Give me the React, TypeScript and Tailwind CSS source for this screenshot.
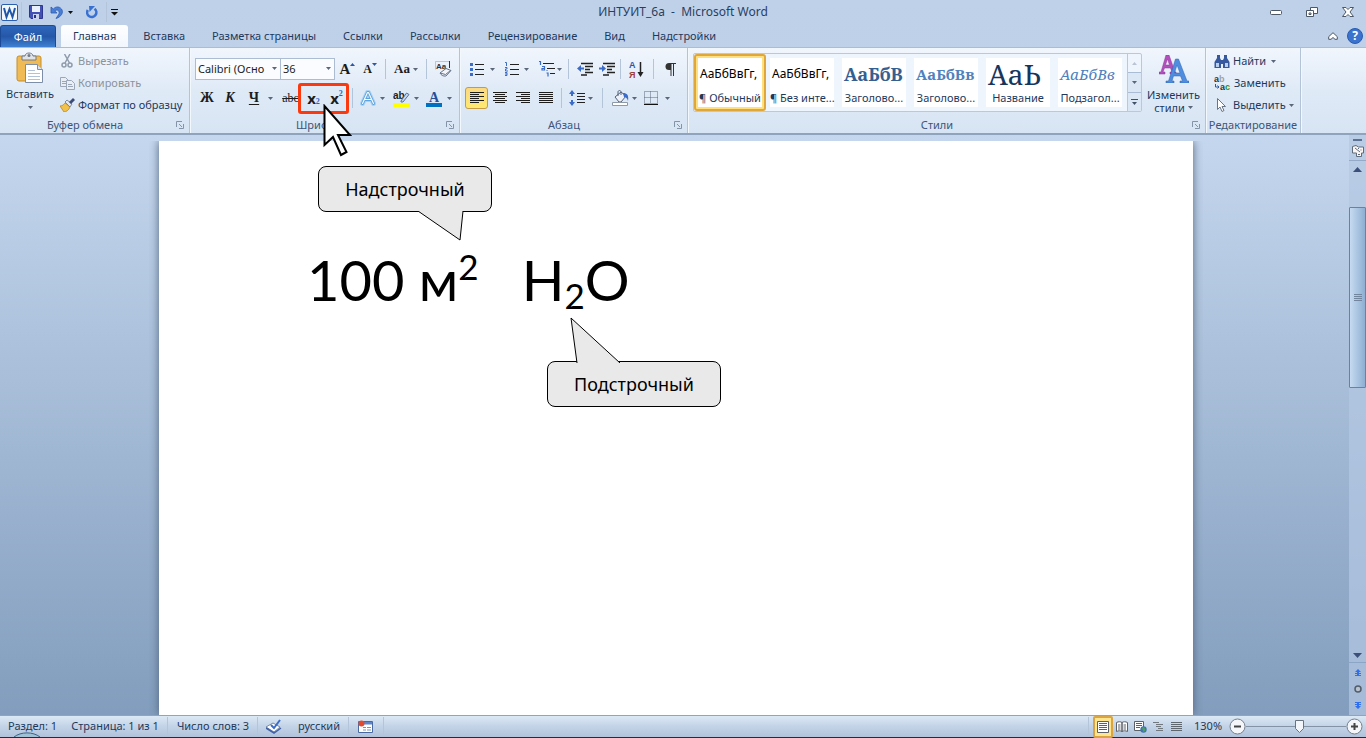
import React, { useState } from 'react';

const INK = '#1e395b';

const Arrow = ({ className = '' }: { className?: string }) => (
  <svg className={`shrink-0 ${className}`} width="5" height="3" viewBox="0 0 5 3">
    <path d="M0 0h5L2.5 3z" fill="#5a6779" />
  </svg>
);

const Sep = ({ className = '' }: { className?: string }) => (
  <span className={`w-px h-5 shrink-0 bg-[#b4c4d9] ${className}`}></span>
);

const Launcher = () => (
  <svg width="8" height="8" viewBox="0 0 8 8" fill="none" stroke="#8393a8">
    <path d="M.5 6V.5H6M3 3l3 3M7.5 3v4.500H3" />
  </svg>
);

type ToolProps = { label: string; className: string; children: React.ReactNode };

const Tool = ({ label, className, children }: ToolProps) => (
  <button type="button" title={label} aria-label={label} className={`h-[22px] shrink-0 flex items-center justify-center ${className}`}>
    {children}
  </button>
);

type GroupProps = { title: string; launcher?: boolean; className?: string; children: React.ReactNode };

const Group = ({ title, launcher, className = '', children }: GroupProps) => (
  <section className={`flex flex-col shrink-0 border-r border-[#b3c3d8] shadow-[1px_0_0_#f3f8fd] ${className}`}>
    <div className="h-[68px] flex">{children}</div>
    <div className="h-[17px] flex items-center pt-px text-[#3e5577]">
      <h2 className="flex-1 text-center whitespace-nowrap">{title}</h2>
      {launcher && (
        <button type="button" aria-label={`${title}: параметры`} className="w-[19px] flex justify-center">
          <Launcher />
        </button>
      )}
    </div>
  </section>
);

/* Lines of text used by the alignment buttons */
const Lines = ({ rows, color = '#1d1d1d' }: { rows: number[][]; color?: string }) => (
  <svg width="16" height="12" viewBox="0 0 16 12" stroke={color}>
    {rows.map(([x1, x2], i) => (
      <path key={i} d={`M${x1} ${i * 2 + 0.5}H${x2}`} />
    ))}
  </svg>
);

const alignments = [
  { label: 'По левому краю', rows: [[1, 15], [1, 10], [1, 15], [1, 10], [1, 15], [1, 10]] },
  { label: 'По центру', rows: [[1, 15], [3, 13], [1, 15], [3, 13], [1, 15], [3, 13]] },
  { label: 'По правому краю', rows: [[1, 15], [6, 15], [1, 15], [6, 15], [1, 15], [6, 15]] },
  { label: 'По ширине', rows: [[1, 15], [1, 15], [1, 15], [1, 15], [1, 15], [1, 15]] },
];

const tabs = ['Вставка', 'Разметка страницы', 'Ссылки', 'Рассылки', 'Рецензирование', 'Вид', 'Надстройки'];

const styles = [
  { name: '¶ Обычный', sample: 'АаБбВвГг,', look: 'text-xs text-black' },
  { name: '¶ Без инте...', sample: 'АаБбВвГг,', look: 'text-xs text-black' },
  { name: 'Заголово...', sample: 'АаБбВ', look: "text-lg font-bold text-[#365f91] font-['Noto_Serif','Liberation_Serif',serif]" },
  { name: 'Заголово...', sample: 'АаБбВв', look: "text-[15px] font-bold text-[#4f81bd] font-['Noto_Serif','Liberation_Serif',serif]" },
  { name: 'Название', sample: 'АаЬ', look: "text-[28px] leading-[28px] text-[#17365d] font-['Noto_Serif','Liberation_Serif',serif]" },
  { name: 'Подзагол...', sample: 'АаБбВв', look: "text-[15px] italic text-[#4f81bd] font-['Noto_Serif','Liberation_Serif',serif]" },
];

const TitleBar = () => (
  <header className="h-6 shrink-0 grid grid-cols-[1fr_auto_1fr] items-center">
    <div className="flex items-center">
      <svg className="ml-px" width="17" height="17" viewBox="0 0 17 17">
        <rect x=".5" y=".5" width="16" height="16" rx="1.500" fill="#f4f8fd" stroke="#2b5fae" />
        <path d="M3 4l2.500 9L8.500 5l3 8L14 4" fill="none" stroke="#1f56a8" strokeWidth="2" />
      </svg>
      <Sep className="ml-[3px] h-3 bg-[#7387a3]" />
      <Tool label="Сохранить" className="w-5 ml-1">
        <svg width="14" height="14" viewBox="0 0 14 14">
          <path d="M.5.5h13v13H2L.5 12z" fill="#4351b5" stroke="#2d3790" />
          <path d="M3 1h8v6H3z" fill="#eaf1fc" />
          <path d="M4 9h6v5H4z" fill="#c9d3ee" />
          <path d="M5 10h2v3H5z" fill="#28318a" />
        </svg>
      </Tool>
      <Tool label="Отменить" className="w-4 ml-0.5">
        <svg width="13" height="13" viewBox="0 0 13 13">
          <path d="M1 1v6h6L4.800 5C7 3 10 4.500 9 8l-3 4.500c5-1.500 8-6 5.500-9.500C9 0 5.500.5 3.300 3z" fill="#4a7fd8" stroke="#2d5cb0" strokeWidth=".8" />
        </svg>
      </Tool>
      <svg className="ml-1" width="5" height="3"><path d="M0 0h5L2.500 3z" fill="#111" /></svg>
      <Tool label="Повторить" className="w-5 ml-2">
        <svg width="13" height="13" viewBox="0 0 13 13" fill="none">
          <path d="M2.800 4a4.600 4.600 0 1 0 6.700-1.300" stroke="#3870d2" strokeWidth="2.600" />
          <path d="M4 0h6L4.500 6z" fill="#3870d2" />
        </svg>
      </Tool>
      <Sep className="ml-[5px] h-3 bg-[#7387a3]" />
      <svg className="ml-1" width="7" height="7"><path d="M0 .5h7" stroke="#111" /><path d="M0 3h7L3.500 6.500z" fill="#111" /></svg>
    </div>
    <h1 className="text-xs leading-4 text-[#2a3f5f]">ИНТУИТ_6а&nbsp; -&nbsp; Microsoft Word</h1>
    <div className="flex items-center justify-end">
      <Tool label="Свернуть" className="w-9">
        <svg width="12" height="5"><rect x=".5" y=".5" width="11" height="4" rx="1" fill="#fff" stroke="#4d5866" /></svg>
      </Tool>
      <Tool label="Восстановить" className="w-9">
        <svg width="12" height="11" viewBox="0 0 12 11" fill="#fff" stroke="#4d5866">
          <path d="M4.500.5h7v6h-7z" />
          <path d="M.5 3.500h7v6h-7zM3 6h2v1.500H3z" />
        </svg>
      </Tool>
      <Tool label="Закрыть" className="w-9">
        <svg width="12" height="10" viewBox="0 0 12 10">
          <path d="M.5.5h3.500l2 2 2-2h3.500L8 5l3.500 4.500H8l-2-2-2 2H.5L4 5z" fill="#fff" stroke="#4d5866" />
        </svg>
      </Tool>
    </div>
  </header>
);

const TabBar = () => (
  <nav className="h-[23px] shrink-0 flex items-end leading-4">
    <button type="button" className="w-14 h-[22px] rounded-t-[3px] border border-b-0 border-[#1d4a94] bg-linear-to-b from-[#2f67bd] via-[#2557a8] to-[#3f80d2] text-white">
      Файл
    </button>
    <button type="button" className="h-[22px] px-3 ml-[5px] rounded-t-[3px] bg-linear-to-b from-white to-[#f1f6fd]">
      Главная
    </button>
    <div className="flex gap-[27px] ml-[15px]">
      {tabs.map((tab) => (
        <button key={tab} type="button" className="h-[22px]">
          {tab}
        </button>
      ))}
    </div>
    <div className="ml-auto flex items-center">
      <Tool label="Свернуть ленту" className="w-4 mr-1.5">
        <svg width="10" height="8" viewBox="0 0 10 8">
          <path d="M5 .7l4.300 4v2.600H7L5 5.500 3 7.300H.7V4.700z" fill="#fff" stroke="#4d5866" />
        </svg>
      </Tool>
      <Tool label="Справка" className="w-4 mr-[3px]">
        <span className="size-4 rounded-full bg-[#3b73cf] border border-[#2a5bb0] text-white text-xs leading-[14px] font-bold">?</span>
      </Tool>
    </div>
  </nav>
);

const Clipboard = () => (
  <Group title="Буфер обмена" launcher className="w-[190px]">
    <button type="button" className="w-[60px] pt-1 flex flex-col items-center">
      <svg width="28" height="32" viewBox="0 0 28 32">
        <rect x="1" y="4" width="24" height="25" rx="2" fill="#f0bb55" stroke="#c58e2e" />
        <path d="M6 4h3c0-4 8-4 8 0h3v4H6z" fill="#dfe3e8" stroke="#727b87" />
        <circle cx="13" cy="3.500" r="1.500" fill="#727b87" />
        <path d="M9.500 12.500h12l5 5v13h-17z" fill="#fff" stroke="#7c8ea8" />
        <path d="M21.500 12.500v5h5" fill="#dbe5f2" stroke="#7c8ea8" />
        <path d="M12 18.500h7M12 21.500h12M12 24.500h12M12 27.500h12" stroke="#b2c1d6" />
      </svg>
      <span className="leading-4 mt-0.5">Вставить</span>
      <Arrow className="mt-1" />
    </button>
    <div className="flex flex-col pt-0.5">
      <button type="button" disabled className="h-[22px] flex items-center gap-[3px] text-[#8b939d]">
        <svg width="15" height="14" viewBox="0 0 15 14" fill="none" stroke="#8f9bab" strokeWidth="1.500">
          <path d="M4.500 0l5 9M10 0L5 9" />
          <circle cx="4" cy="11" r="2" />
          <circle cx="10" cy="11" r="2" />
        </svg>
        Вырезать
      </button>
      <button type="button" disabled className="h-[22px] flex items-center gap-[3px] text-[#8b939d]">
        <svg width="15" height="13" viewBox="0 0 15 13" fill="#e9eef5" stroke="#9ba7b7">
          <path d="M.5.5h5l3 3v6h-8zM2 4.500h4M2 6.500h4" />
          <path d="M6.500 3.500h5l3 3v6h-8zM8 7.500h4M8 9.500h5" />
        </svg>
        Копировать
      </button>
      <button type="button" className="h-[22px] flex items-center gap-[3px]">
        <svg width="15" height="14" viewBox="0 0 15 14">
          <path d="M0 8c3 0 4-2 5-3l5 4c-1 3-4 5-6 5z" fill="#f1c14a" stroke="#b98a1e" strokeWidth=".8" />
          <path d="M5 4l2-2 5 4-2 3z" fill="#dfe6f0" stroke="#68778c" strokeWidth=".8" />
          <path d="M9 4l4-4 2 2-4 4z" fill="#3c4c78" />
        </svg>
        Формат по образцу
      </button>
    </div>
  </Group>
);

const FontGroup = () => (
  <Group title="Шрифт" launcher className="w-[270px]">
    <div className="pl-[5px] pt-2.5 flex flex-col gap-[7px] text-[#1c1c1c]">
      <div className="flex items-center h-[22px]">
        <label className="relative block w-[86px]">
          <select aria-label="Шрифт" className="block appearance-none w-full h-[22px] pl-0.5 border border-[#abbcd3] bg-[#fafcff] overflow-hidden">
            <option>Calibri (Осно</option>
          </select>
          <Arrow className="absolute right-1 top-[9px]" />
        </label>
        <label className="relative block w-[55px] -ml-px">
          <select aria-label="Размер шрифта" defaultValue="36" className="block appearance-none w-full h-[22px] pl-0.5 border border-[#abbcd3] bg-[#fafcff]">
            <option>12</option>
            <option>36</option>
            <option>72</option>
          </select>
          <Arrow className="absolute right-1 top-[9px]" />
        </label>
        <Tool label="Увеличить размер" className="w-[23px] ml-px">
          <span className="font-['Liberation_Serif',serif] font-bold text-[15px] leading-4">A</span>
          <svg className="mb-2.5" width="5" height="3"><path d="M0 3h5L2.500 0z" fill="#2d56a5" /></svg>
        </Tool>
        <Tool label="Уменьшить размер" className="w-[22px]">
          <span className="font-['Liberation_Serif',serif] font-bold text-xs leading-4">A</span>
          <svg className="mb-2.5" width="5" height="3"><path d="M0 0h5L2.500 3z" fill="#2d56a5" /></svg>
        </Tool>
        <Sep className="ml-1" />
        <Tool label="Регистр" className="w-9 gap-[3px] ml-0.5">
          <span className="font-['Liberation_Serif',serif] font-bold text-[13px] leading-4">Aa</span>
          <Arrow />
        </Tool>
        <Sep className="ml-0.5" />
        <Tool label="Очистить формат" className="w-6 ml-1">
          <svg width="17" height="16" viewBox="0 0 17 16">
            <path d="M.5.5h14M.5.5v8" fill="none" stroke="#9ba7b7" strokeWidth=".6" />
            <text x="1" y="8" fontSize="8" fontFamily="Liberation Sans" fontWeight="bold" fill="#333">Aa</text>
            <path d="M14.500 0v7" fill="none" stroke="#333" />
            <path d="M5 12l6-4.500 5 2-5 5.500c-3 .5-5-1-6-3z" fill="#f3f5fa" stroke="#65748c" />
            <path d="M5 12l5.500 1.500 5-4" fill="none" stroke="#65748c" />
          </svg>
        </Tool>
      </div>
      <div className="flex items-center h-[22px] font-bold">
        <Tool label="Полужирный" className="w-6 font-['Liberation_Serif',serif] text-sm">Ж</Tool>
        <Tool label="Курсив" className="w-[22px] font-['Liberation_Serif',serif] text-sm italic">К</Tool>
        <Tool label="Подчеркнутый" className="w-[38px] gap-[9px] pl-0.5 font-['Liberation_Serif',serif] text-sm">
          <span className="underline underline-offset-2 decoration-1">Ч</span>
          <Arrow />
        </Tool>
        <Tool label="Зачеркнутый" className="w-[23px] font-['Liberation_Serif',serif] text-xs font-normal line-through">abc</Tool>
        <div className="relative flex">
          <Tool label="Подстрочный знак" className="w-[23px]">
            <span className="text-[15px] leading-4">x</span>
            <span className="font-['Liberation_Serif',serif] text-[8px] leading-none mt-2 text-[#2d62b8]">2</span>
          </Tool>
          <Tool label="Надстрочный знак" className="w-[23px]">
            <span className="text-[15px] leading-4">x</span>
            <span className="font-['Liberation_Serif',serif] text-[8px] leading-none mb-2 text-[#2d62b8]">2</span>
          </Tool>
          {/* Рамка и указатель поверх кнопок */}
          <div className="absolute -left-1 -right-px -top-1 -bottom-[5px] border-[3px] border-[#fa3a0e] rounded-[3px] pointer-events-none"></div>
          <svg className="absolute z-10 left-[21px] top-[17px] pointer-events-none" width="30" height="54" viewBox="0 0 30 54">
            <path d="M1.500 2v39l8.500-8 8 18 5.500-3-8.500-17H27z" fill="#fff" stroke="#000" strokeWidth="2" />
          </svg>
        </div>
        <Sep className="ml-1" />
        <Tool label="Эффекты" className="w-[34px] gap-1 ml-0.5">
          <svg width="16" height="16" viewBox="0 0 16 16" strokeLinejoin="round" strokeLinecap="round">
            <path d="M2.500 13.500L7.500 2.500h1l5 11M5 9.500h6" fill="none" stroke="#a8d2f3" strokeWidth="5" />
            <path d="M2.500 13.500L7.500 2.500h1l5 11M5 9.500h6" fill="none" stroke="#5da3dc" strokeWidth="3" />
            <path d="M2.500 13.500L7.500 2.500h1l5 11M5 9.500h6" fill="none" stroke="#f6fbff" strokeWidth="1.200" />
          </svg>
          <Arrow />
        </Tool>
        <Tool label="Цвет выделения" className="w-[34px] gap-1">
          <svg width="17" height="17" viewBox="0 0 17 17">
            <text x="0" y="9" fontSize="10" fontWeight="bold" fontFamily="Liberation Sans" fill="#222">ab</text>
            <path d="M8 11l5.500-8L16 4.500 10 12H8z" fill="#c9d7ee" stroke="#53709e" />
            <path d="M0 13h17v4H0z" fill="#ffff00" />
          </svg>
          <Arrow />
        </Tool>
        <Tool label="Цвет текста" className="w-8 gap-[5px]">
          <svg width="16" height="17" viewBox="0 0 16 17">
            <text x="3" y="12" fontSize="14" fontWeight="bold" fontFamily="Liberation Serif" fill="#284f96">A</text>
            <path d="M0 13h16v4H0z" fill="#0070c0" />
          </svg>
          <Arrow />
        </Tool>
      </div>
    </div>
  </Group>
);

const Paragraph = () => {
  const [align, setAlign] = useState(0);
  return (
    <Group title="Абзац" launcher className="w-[228px]">
      <div className="pl-[5px] pt-2.5 flex flex-col gap-[7px]">
        <div className="flex items-center h-[22px]">
          <Tool label="Маркеры" className="w-[34px] gap-[5px]">
            <svg width="15" height="14" viewBox="0 0 15 14">
              <path d="M5 2.500h9M5 7.500h9M5 12.500h9" stroke="#222" />
              <path d="M0 1h3v3H0zM0 6h3v3H0zM0 11h3v3H0z" fill="#3b6cc8" />
            </svg>
            <Arrow />
          </Tool>
          <Tool label="Нумерация" className="w-[34px] gap-[5px]">
            <svg width="15" height="14" viewBox="0 0 15 14">
              <path d="M6 2.500h9M6 7.500h9M6 12.500h9" stroke="#222" />
              <path d="M1 .5h1.500v3.500M1 5.500h2v1.500H1.500V9H4M1 10.500h2V13.500H1M1 12h2" fill="none" stroke="#3b6cc8" />
            </svg>
            <Arrow />
          </Tool>
          <Tool label="Многоуровневый список" className="w-[34px] gap-0.5">
            <svg width="17" height="16" viewBox="0 0 17 16">
              <path d="M5 2.500h11M9 7.500h8M12 12.500h5" stroke="#222" />
              <path d="M1 .5h1.500v3.500M4 5.500h2.500v3.500H4V7.500h2M8.500 9.500h1M8.500 12h1.500v3.500" fill="none" stroke="#3b6cc8" strokeWidth="1.200" />
            </svg>
            <Arrow />
          </Tool>
          <Sep className="ml-px" />
          <Tool label="Уменьшить отступ" className="w-[22px] ml-[5px]">
            <svg width="16" height="14" viewBox="0 0 16 14">
              <path d="M4 1.500h12M8 4.500h8M8 7.500h5M8 10.500h8M4 13h6" stroke="#222" strokeWidth="1.500" />
              <path d="M0 6.500L4 3v2.500h3v2H4V10z" fill="#3b6cc8" />
            </svg>
          </Tool>
          <Tool label="Увеличить отступ" className="w-[22px]">
            <svg width="16" height="14" viewBox="0 0 16 14">
              <path d="M4 1.500h12M8 4.500h8M8 7.500h5M8 10.500h8M4 13h6" stroke="#222" strokeWidth="1.500" />
              <path d="M7 6.500L3 3v2.500H0v2h3V10z" fill="#3b6cc8" />
            </svg>
          </Tool>
          <Sep className="ml-0.5" />
          <Tool label="Сортировка" className="w-6 ml-1">
            <svg width="16" height="20" viewBox="0 0 16 20">
              <text x="0" y="9" fontSize="9" fontWeight="bold" fontFamily="Liberation Sans" fill="#2d56a5">А</text>
              <text x="0" y="19" fontSize="9" fontWeight="bold" fontFamily="Liberation Sans" fill="#9c3d3d">Я</text>
              <path d="M11.500 3v13" stroke="#222" strokeWidth="1.500" />
              <path d="M8.500 13h6l-3 5z" fill="#222" />
            </svg>
          </Tool>
          <Sep className="ml-1" />
          <Tool label="Непечатаемые знаки" className="w-6 ml-1">
            <svg width="11" height="13" viewBox="0 0 11 13">
              <path d="M5.500.5H11M6 .5V13M8.500.5V13" stroke="#333" fill="none" />
              <path d="M6 0H4a3.500 3.500 0 0 0 0 7h2z" fill="#333" />
            </svg>
          </Tool>
        </div>
        <div className="flex items-center h-[22px]">
          {alignments.map((item, i) => (
            <button
              key={item.label}
              type="button"
              title={item.label}
              aria-label={item.label}
              onClick={() => setAlign(i)}
              className={`w-[23px] h-[22px] flex items-center justify-center rounded-[3px] border ${
                align === i ? 'border-[#c59b44] bg-linear-to-b from-[#fbd983] to-[#ffe96f]' : 'border-transparent'
              }`}
            >
              <Lines rows={item.rows} />
            </button>
          ))}
          <Sep className="ml-1" />
          <Tool label="Интервал" className="w-[34px] ml-0.5 gap-0.5">
            <svg width="17" height="16" viewBox="0 0 17 16">
              <path d="M8 3.500h8M8 6.500h8M8 9.500h8M8 12.500h8" stroke="#222" />
              <path d="M3 0l3 4H4v2H2V4H0zM3 16l3-4H4v-2H2v2H0z" fill="#3b6cc8" />
            </svg>
            <Arrow />
          </Tool>
          <Sep className="ml-1" />
          <Tool label="Заливка" className="w-[34px] ml-1 gap-[3px]">
            <svg width="17" height="16" viewBox="0 0 17 16">
              <path d="M3 7l6-5 5 4-5 6H7z" fill="#eef2f8" stroke="#53627a" />
              <path d="M6 6V2c0-2 3-2 3 0v3" fill="none" stroke="#53627a" />
              <path d="M11 3c4 0 6 2 5 8-1-3-2-4-4-4z" fill="#3b6cc8" />
              <path d="M.5 12.500h15v3H.5z" fill="#fff" stroke="#8d98a8" />
            </svg>
            <Arrow />
          </Tool>
          <Tool label="Границы" className="w-8 gap-[7px]">
            <svg width="14" height="14" viewBox="0 0 14 14" fill="none">
              <path d="M.5.5h13v12H.5zM6.500 .5v12M.5 6.500h13" stroke="#5a6779" strokeDasharray="1 1" />
              <path d="M0 13.500h14" stroke="#111" />
            </svg>
            <Arrow />
          </Tool>
        </div>
      </div>
    </Group>
  );
};

const Styles = () => (
  <Group title="Стили" launcher className="w-[518px]">
    <div className="ml-[5px] mt-[5px] h-[59px] flex border border-[#b9c9dd] rounded-[2px] bg-[#eff5fc]">
      {styles.map((style, i) => (
        <button
          key={style.sample + i}
          type="button"
          className={`w-[72px] p-0.5 rounded-[3px] border-2 ${i === 0 ? 'border-[#dfa63c] bg-[#ffdf7e]' : 'border-transparent'}`}
        >
          <span className="h-full w-full bg-white flex flex-col">
            <span className={`h-8 px-0.5 flex items-center whitespace-nowrap ${style.look}`}>{style.sample}</span>
            <span className="leading-4 text-center whitespace-nowrap">{style.name}</span>
          </span>
        </button>
      ))}
      <div className="w-3.5 ml-px flex flex-col border-l border-[#b9c9dd]">
        <button type="button" aria-label="Вверх" className="flex-1 flex items-center justify-center">
          <svg width="5" height="3"><path d="M0 3h5L2.500 0z" fill="#b9c5d4" /></svg>
        </button>
        <button type="button" aria-label="Вниз" className="flex-1 flex items-center justify-center border-t border-[#a9bcd4] bg-[#dbe7f5]">
          <Arrow />
        </button>
        <button type="button" aria-label="Дополнительно" className="flex-1 flex items-center justify-center border-t border-[#a9bcd4] bg-[#dbe7f5]">
          <svg width="7" height="6"><path d="M0 .5h7" stroke="#3f4f66" /><path d="M1 3h5L3.500 6z" fill="#3f4f66" /></svg>
        </button>
      </div>
    </div>
    <button type="button" className="flex-1 pt-[7px] flex flex-col items-center">
      <svg width="30" height="28" viewBox="0 0 30 28">
        <path d="M0 19h6v-2H4l1.500-4h6l1.500 4h-2v2h6v-2h-1L10 0H7L2 17H0zM6.500 10L8.500 4l2 6z" fill="#b34fbd" stroke="#8b3798" strokeWidth=".5" />
        <path d="M7 28h8v-2h-2l1.500-5h7l2 5h-2.500v2h9v-2h-2L19.500 4h-3L9.500 26H7zM15.500 18l2.500-8 3 8z" fill="#4f8de0" stroke="#2d62ae" strokeWidth=".5" />
      </svg>
      <span className="mt-[5px] leading-[13px]">Изменить</span>
      <span className="leading-[13px] flex items-center gap-[3px]">стили <Arrow /></span>
    </button>
  </Group>
);

const Editing = () => (
  <Group title="Редактирование" className="w-[95px]">
    <div className="pl-2 pt-0.5 flex flex-col">
      <button type="button" className="h-[22px] flex items-center gap-[3px]">
        <svg width="16" height="13" viewBox="0 0 16 13">
          <path d="M3 0h3v3l1 2v8H.5V7L3 3zM10 0h3v3l2.500 4v6H9V5l1-2zM6 5h4v4H6z" fill="#35589e" />
          <path d="M2 8h3v4H2zM11 8h3v4h-3z" fill="#b9cff0" />
        </svg>
        Найти <Arrow className="ml-0.5" />
      </button>
      <button type="button" className="h-[22px] flex items-center gap-[3px]">
        <svg width="17" height="16" viewBox="0 0 17 16" fontFamily="Liberation Sans" fontWeight="bold" fontSize="9">
          <text x="0" y="7" fill="#333">a</text>
          <text x="5" y="7" fill="#9aa3ae">b</text>
          <text x="6" y="15" fill="#333">a</text>
          <text x="11" y="15" fill="#21923b">c</text>
          <path d="M1.500 9v3H5M3.500 10.500L5 12l-1.500 1.500" fill="none" stroke="#2d56a5" />
        </svg>
        Заменить
      </button>
      <button type="button" className="h-[22px] flex items-center gap-[3px]">
        <svg width="16" height="14" viewBox="0 0 16 14">
          <path d="M3.500.5v11L6 9l2 4.500 2-1-2-4h3.500z" fill="#fff" stroke="#6a7688" />
        </svg>
        Выделить <Arrow />
      </button>
    </div>
  </Group>
);

type CalloutProps = { text: string; place: string; tail: string; tailPlace: string; width: number; height: number };

const Callout = ({ text, place, tail, tailPlace, width, height }: CalloutProps) => (
  <div className={`absolute w-[174px] h-[46px] flex items-center justify-center rounded-lg border border-black bg-[#e9e9e9] text-lg text-black font-['Noto_Sans','Open_Sans',sans-serif] ${place}`}>
    {text}
    <svg className={`absolute ${tailPlace}`} width={width} height={height} viewBox={`0 0 ${width} ${height}`}>
      <path d={tail} fill="#e9e9e9" stroke="#000" />
    </svg>
  </div>
);

const ScrollBar = () => (
  <aside className="w-[17px] shrink-0 flex flex-col items-center bg-[#b3c8e3]/70">
    <div className="w-full h-[26px] flex flex-col items-center gap-1 pt-1 border-b border-[#93a9c6]">
      <span className="w-[9px] h-0.5 bg-[#5b7194]"></span>
      <svg width="12" height="12" viewBox="0 0 12 12" fill="#faf5f2" stroke="#5f6b7d">
        <path d="M.5 1.500L4 .5l2.500 1.500h5v6H9.500v3.500h-5V8H.5z" />
        <path d="M3 3l5 4M6.500 3v1M9 4.500v1M6 9.500h2" />
      </svg>
    </div>
    <button type="button" aria-label="Прокрутить вверх" className="h-[17px] flex items-center">
      <svg width="9" height="5"><path d="M0 5h9L4.500 0z" fill="#3c4f7a" /></svg>
    </button>
    <div className="flex-1 w-full pt-[29px]">
      <div className="w-full h-[181px] flex items-center justify-center border border-[#6582a8] rounded-[1px] bg-linear-to-r from-[#c6dbf1] to-[#8eafd2]">
        <svg width="8" height="8" stroke="#71859e"><path d="M0 .5h8M0 2.500h8M0 4.500h8M0 6.500h8" /></svg>
      </div>
    </div>
    <button type="button" aria-label="Прокрутить вниз" className="w-full h-[15px] flex items-center justify-center border-b border-[#8ba5c6]">
      <svg width="9" height="5"><path d="M0 0h9L4.500 5z" fill="#3c4f7a" /></svg>
    </button>
    <button type="button" aria-label="Предыдущая страница" className="h-[19px] flex items-center">
      <svg width="6" height="7" fill="#2f6ff0"><path d="M3 0l3 3H4v1h2v1H4v1h2v1H0V6h2V5H0V4h2V3H0z" /></svg>
    </button>
    <button type="button" aria-label="Объект перехода" className="h-[14px] flex items-center">
      <svg width="8" height="8"><circle cx="4" cy="4" r="3" fill="#b9c2cd" stroke="#525d6b" strokeWidth="1.500" /></svg>
    </button>
    <button type="button" aria-label="Следующая страница" className="h-[19px] flex items-center">
      <svg width="6" height="7" fill="#2f6ff0"><path d="M3 7l3-3H4V3h2V2H4V1h2V0H0v1h2v1H0v1h2v1H0z" /></svg>
    </button>
  </aside>
);

const Document = () => (
  <main className="flex-1 min-h-0 flex bg-linear-to-b from-[#c5d7ee] to-[#829dbd]">
    <div className="flex-1 flex justify-center pt-1.5 pl-[3px]">
      <article className="relative w-full max-w-[1034px] bg-white shadow-[0_0_9px_#52647e] [clip-path:inset(0_-10px)]">
        <p className="pl-[148px] pt-[107px] text-[56px] leading-[64px] text-black whitespace-pre font-['Lato','Noto_Sans',sans-serif]">
          100 м<sup className="text-[35px] leading-none align-[21px] top-0">2</sup>
          {'   '}H<sub className="text-[35px] leading-none align-[-8px] bottom-0">2</sub>O
        </p>
        <Callout
          text="Надстрочный"
          place="left-[159px] top-[25px]"
          tail="M0 0L42 29L45 0"
          tailPlace="left-[99px] top-[44px]"
          width={46}
          height={31}
        />
        <Callout
          text="Подстрочный"
          place="left-[388px] top-[220px]"
          tail="M7 46L1 1L50 46"
          tailPlace="left-[22px] -top-[45px]"
          width={52}
          height={46}
        />
      </article>
    </div>
    <ScrollBar />
  </main>
);

const StatusBar = () => {
  const [zoom, setZoom] = useState(130);
  return (
    <footer className="relative h-[23px] shrink-0 flex items-center border-t border-[#8aa5c6] bg-linear-to-b from-[#dce8f5] via-[#c3d3e7] to-[#b0c3db] border-b border-b-[#232b38]">
      <svg className="absolute left-[13px] bottom-0" width="28" height="5" viewBox="0 0 28 5">
        <path d="M1 5C8-.5 20-.5 27 5" fill="#9fc2d6" stroke="#3a6285" />
      </svg>
      <span className="relative ml-2">Раздел: 1</span>
      <span className="ml-3.5">Страница: 1 из 1</span>
      <Sep className="ml-2" />
      <span className="ml-[9px]">Число слов: 3</span>
      <Sep className="ml-2" />
      <Tool label="Правописание" className="w-4 ml-2">
        <svg width="16" height="15" viewBox="0 0 16 15">
          <path d="M0 8l7-4 7 4-6 5z" fill="#fff" stroke="#7789a4" />
          <path d="M0 9l8 5 7-5" fill="none" stroke="#4262a8" strokeWidth="1.500" />
          <path d="M5 6l3 3 6-8" fill="none" stroke="#3b6cc8" strokeWidth="2" />
        </svg>
      </Tool>
      <button type="button" className="ml-4">русский</button>
      <Sep className="ml-2" />
      <Tool label="Запись макроса" className="w-4 ml-[9px]">
        <svg width="16" height="14" viewBox="0 0 16 14">
          <path d="M.5 1.500h14v11H.5z" fill="#fff" stroke="#4a68a0" />
          <path d="M1 2h13v2.500H1z" fill="#5d85cc" />
          <path d="M5 7.500h3M5 10h3M9 7.500h4M9 10h4" stroke="#7c93bb" />
          <circle cx="3.500" cy="3.500" r="3" fill="#e5492c" />
        </svg>
      </Tool>
      <Sep className="ml-[9px]" />

      <div className="ml-auto flex items-center">
        <Sep />
        <Tool label="Разметка страницы" className="w-5 h-[19px] ml-1 rounded-[2px] border-2 border-[#d9a441] bg-[#ffe58e]">
          <svg width="12" height="12" viewBox="0 0 12 12" stroke="#5b6069">
            <path d="M.5.5h11v11H.5z" fill="#fff" />
            <path d="M2 2.500h8M2 4.500h8M2 6.500h8M2 8.500h8" />
          </svg>
        </Tool>
        <Tool label="Режим чтения" className="w-[18px]">
          <svg width="12" height="12" viewBox="0 0 12 12" fill="#fff" stroke="#5b6069">
            <path d="M.5 1.500c2-1 4-1 5.500 0v9c-1.500-1-3.500-1-5.500 0zM11.500 1.500c-2-1-4-1-5.500 0v9c1.500-1 3.500-1 5.500 0zM2 4h2.500M2 6h2.500M2 8h2.500M7.500 4H10M7.500 6H10M7.500 8H10" />
          </svg>
        </Tool>
        <Tool label="Веб-документ" className="w-[18px]">
          <svg width="13" height="12" viewBox="0 0 13 12">
            <path d="M.5.5h9v9h-9zM2 2.500h6M2 4.500h6M2 6.500h4" fill="#fff" stroke="#5b6069" />
            <circle cx="9.500" cy="8.500" r="3.200" fill="#3f74b4" />
            <path d="M8 7l2-1 1.500 3-2 2z" fill="#4fa35f" />
          </svg>
        </Tool>
        <Tool label="Структура" className="w-[18px]">
          <svg width="10" height="9" stroke="#70777f"><path d="M0 .5h6M3 2.500h7M3 4.500h5M5 6.500h5M3 8.500h7" /></svg>
        </Tool>
        <Tool label="Черновик" className="w-[18px]">
          <svg width="11" height="9" stroke="#60666e"><path d="M0 .5h11M0 2.500h11M0 4.500h11M0 6.500h11M0 8.500h11" /></svg>
        </Tool>
        <span className="ml-[9px] w-8">{zoom}%</span>
        <button type="button" aria-label="Уменьшить" onClick={() => setZoom(zoom - 10)} className="ml-[3px]">
          <svg className="block" width="17" height="17"><circle cx="8.500" cy="8.500" r="7.500" fill="#f4f6f9" stroke="#747f8d" /><path d="M5 8.500h7" stroke="#444" strokeWidth="2" /></svg>
        </button>
        <div className="relative w-[100px] h-[17px]">
          <svg className="block" width="100" height="17">
            <path d="M0 8.500h100" stroke="#8593a6" />
            <path d="M49.500 2.500h8v8l-4 4-4-4z" fill="#f2f5f9" stroke="#68737f" />
          </svg>
          <input
            type="range"
            aria-label="Масштаб"
            min="10"
            max="500"
            value={zoom}
            onChange={(e) => setZoom(Number(e.target.value))}
            className="absolute inset-0 w-full h-full opacity-0"
          />
        </div>
        <button type="button" aria-label="Увеличить" onClick={() => setZoom(zoom + 10)} className="mr-[3px]">
          <svg className="block" width="17" height="17"><circle cx="8.500" cy="8.500" r="7.500" fill="#f4f6f9" stroke="#747f8d" /><path d="M5 8.500h7M8.500 5v7" stroke="#444" strokeWidth="2" /></svg>
        </button>
      </div>
    </footer>
  );
};

const App = () => {
  return (
    <div
      className="h-screen flex flex-col overflow-hidden bg-linear-to-b from-[#bfd1e9] to-[#b9cce5] text-[11px] font-['Noto_Sans','Open_Sans',sans-serif]"
      style={{ color: INK }}
    >
      <TitleBar />
      <TabBar />
      {/* Лента */}
      <div className="shrink-0 flex border-t border-b-2 border-t-[#aabdd6] border-b-[#8fa3bd] bg-linear-to-b from-[#f1f6fd] via-[#dfeaf7] to-[#d7e4f3]">
        <Clipboard />
        <FontGroup />
        <Paragraph />
        <Styles />
        <Editing />
      </div>
      <Document />
      <StatusBar />
    </div>
  );
};

export default App;
